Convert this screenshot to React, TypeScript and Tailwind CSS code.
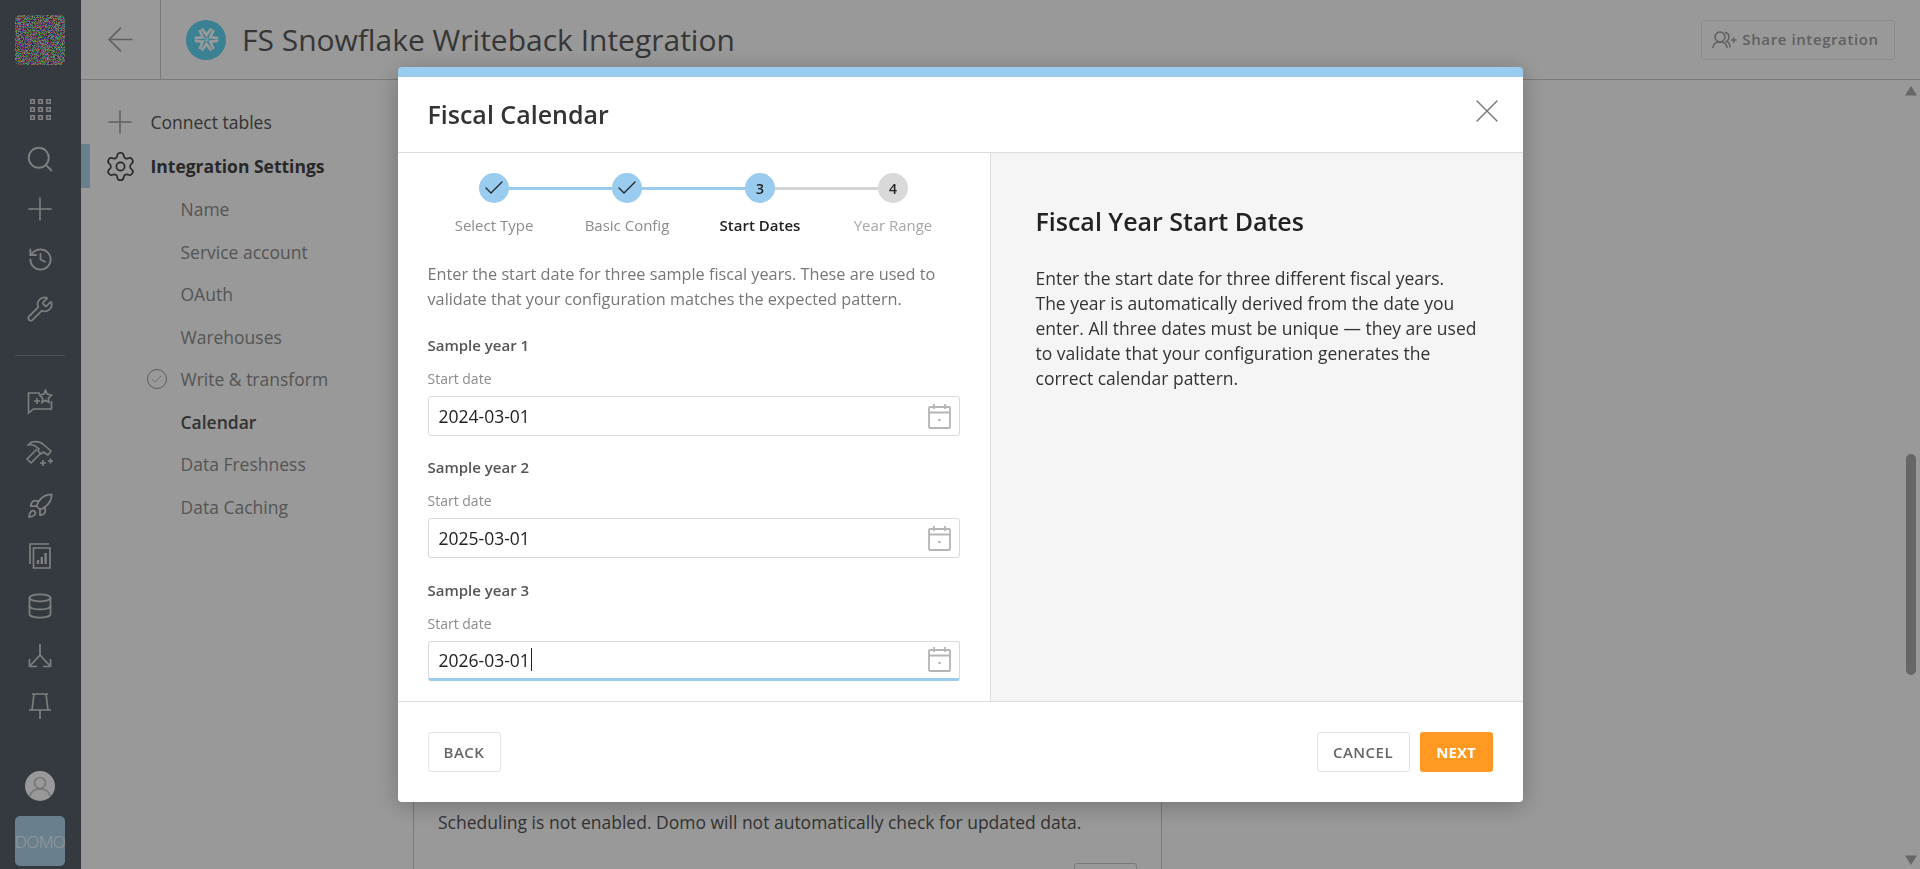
import { ArrowLeft, Check, Database, History, Plus, Rocket, Search, Settings, Wrench, X } from "lucide-react";

const FONT = "font-['Open_Sans',sans-serif]";

// deterministic noise for the generated avatar tile
function noiseCells() {
  const cells: { x: number; y: number; fill: string }[] = [];
  let seed = 7;
  const next = () => {
    seed = (seed * 16807) % 2147483647;
    return seed / 2147483647;
  };
  for (let y = 0; y < 50; y++) {
    for (let x = 0; x < 50; x++) {
      const r = Math.round(40 + next() * 215);
      const g = Math.round(40 + next() * 215);
      const b = Math.round(40 + next() * 215);
      cells.push({ x, y, fill: `rgb(${r},${g},${b})` });
    }
  }
  return cells;
}

function NoiseTile() {
  return (
    <svg viewBox="0 0 50 50" shapeRendering="crispEdges" className="h-[50px] w-[50px] rounded-[5px]">
      {noiseCells().map((cell) => (
        <rect key={`${cell.x}-${cell.y}`} x={cell.x} y={cell.y} width="1" height="1" fill={cell.fill} />
      ))}
    </svg>
  );
}

function GridIcon() {
  return (
    <svg viewBox="0 0 21 21" className="h-[21px] w-[21px]" fill="currentColor">
      {[0, 8, 16].map((y) =>
        [0, 8, 16].map((x) => (
          <path key={`${x}-${y}`} fillRule="evenodd" d={`M${x} ${y}h5v5h-5zM${x + 1.5} ${y + 1.5}v2h2v-2z`} />
        )),
      )}
    </svg>
  );
}

function AiChatIcon() {
  return (
    <svg viewBox="0 0 26 26" className="h-[26px] w-[26px]" fill="none" stroke="currentColor" strokeWidth="1.6">
      <path d="M13 4H1.500v20l5-4h18v-8" />
      <path d="M18.500 1l1.600 4 4.400 1.200-3.200 3 .6 4.300-3.400-2.200-3.600 2.200.8-4.300-3.200-3L17 5z" />
      <path d="M7 12h6M10 9v6" />
    </svg>
  );
}

function HammerPlusIcon() {
  return (
    <svg viewBox="0 0 28 28" className="h-[28px] w-[28px]" fill="none" stroke="currentColor" strokeWidth="1.6" strokeLinejoin="round">
      <path d="M2 5l4-3c5-1 9 0 12 3l7 6-3 4-5-3-2 2-3-3 1-2c-3-3-6-5-11-4z" />
      <path d="M11 9L1 19l4 4 10-10" />
      <path d="M14 23h6M17 20v6M22 21h5M24.500 18.500v5" />
    </svg>
  );
}

function PagesIcon() {
  return (
    <svg viewBox="0 0 22 26" className="h-[26px] w-[22px]" fill="none" stroke="currentColor" strokeWidth="1.7">
      <path d="M20 1H1v20" />
      <path d="M4.500 5h16.500v20H4.500z" />
      <path d="M9 21v-4M12.800 21v-7M16.600 21V10" strokeWidth="2.400" />
    </svg>
  );
}

function BranchIcon() {
  return (
    <svg viewBox="0 0 24 24" className="h-[24px] w-[24px]" fill="none" stroke="currentColor" strokeWidth="1.7">
      <path d="M12 0v11L2 22M12 11l10 11" />
      <path d="M1.500 15v7.500H9M22.500 15v7.500H15" />
    </svg>
  );
}

function PinIcon() {
  return (
    <svg viewBox="0 0 24 26" className="h-[26px] w-[24px]" fill="none" stroke="currentColor" strokeWidth="1.6">
      <path d="M4 1h16M6 1L4 17M18 1l2 16M1 17h22M12 17v9" />
    </svg>
  );
}

function SnowflakeMark() {
  return (
    <span className="flex h-10 w-10 items-center justify-center rounded-full bg-[#5fd8f5]">
      <svg viewBox="0 0 24 24" className="h-[25px] w-[25px]" fill="none" stroke="#ffffff" strokeWidth="2.600">
        {[0, 60, 120, 180, 240, 300].map((angle) => (
          <path key={angle} d="M7.500 1.500L12 7.800l4.500-6.300" transform={`rotate(${angle} 12 12)`} />
        ))}
        <circle cx="12" cy="12" r="1.400" strokeWidth="1" />
      </svg>
    </span>
  );
}

function ShareIcon() {
  return (
    <svg viewBox="0 0 25 18" className="h-[18px] w-[25px]" fill="none" stroke="currentColor" strokeWidth="1.500">
      <circle cx="8" cy="6" r="5" />
      <path d="M1 17c0-4 3-6 7-6s7 2 7 6" />
      <path d="M13 1.500c3 .5 4 2.500 4 4.500s-1 3.500-2.500 4.500c2 .5 3.500 2.500 3.500 6" />
      <path d="M19 9h5.500M21.700 6.300v5.400" />
    </svg>
  );
}

function CalendarIcon() {
  return (
    <svg viewBox="0 0 23 25" className="h-[25px] w-[23px] shrink-0" fill="none" stroke="#b5b5b5" strokeWidth="1.800">
      <rect x="1" y="3" width="21" height="21" rx="1" />
      <path d="M1 8.500h21M6 0v5M17 0v5" />
      <circle cx="11.500" cy="16" r="1.300" fill="#b5b5b5" stroke="none" />
    </svg>
  );
}

function Rail() {
  const iconSlot = "flex h-[50px] items-center justify-center";
  return (
    <aside className="flex w-[81px] shrink-0 flex-col items-center bg-[#57626a] pr-px pt-[15px] text-[#d4d4d4]">
      <NoiseTile />
      <div className="mt-[19px] flex w-full flex-col">
        <div className={iconSlot}><GridIcon /></div>
        <div className={iconSlot}><Search size={30} strokeWidth={1.500} /></div>
        <div className={iconSlot}><Plus size={38} strokeWidth={1} /></div>
        <div className={iconSlot}><History size={27} strokeWidth={1.600} /></div>
        <div className={iconSlot}><Wrench size={28} strokeWidth={1.500} /></div>
      </div>
      <div className="mt-[21px] h-px w-[50px] bg-[#7a848b]" />
      <div className="mt-[21px] flex w-full flex-col">
        <div className={iconSlot}><AiChatIcon /></div>
        <div className="flex h-[54px] items-center justify-center"><HammerPlusIcon /></div>
        <div className={iconSlot}><Rocket size={28} strokeWidth={1.500} /></div>
        <div className={iconSlot}><PagesIcon /></div>
        <div className={iconSlot}><Database size={28} strokeWidth={1.500} /></div>
        <div className={iconSlot}><BranchIcon /></div>
        <div className={iconSlot}><PinIcon /></div>
      </div>
      <div className="mt-[40px] flex h-[30px] w-[30px] items-end justify-center overflow-hidden rounded-full bg-white text-[#c6c6c6]">
        <svg viewBox="0 0 30 30" className="h-[30px] w-[30px]" fill="none" stroke="currentColor" strokeWidth="1.600">
          <circle cx="15" cy="12" r="5.500" />
          <path d="M5 25c1-5 5-7 10-7s9 2 10 7" />
        </svg>
      </div>
      <div className="mt-[15px] flex h-[50px] w-[50px] items-center justify-center overflow-hidden rounded-[5px] bg-[#b0d4ec]">
        <span className="text-[17px] font-light leading-none tracking-[-0.5px] text-white">DOMO</span>
      </div>
    </aside>
  );
}

const subItems = [
  { label: "Name" },
  { label: "Service account" },
  { label: "OAuth" },
  { label: "Warehouses" },
  { label: "Write & transform", done: true },
  { label: "Calendar", active: true },
  { label: "Data Freshness" },
  { label: "Data Caching" },
];

function SideNav() {
  return (
    <nav className="w-[332px] shrink-0 pt-[20px] text-[17.500px]">
      <div className="flex h-[44px] items-center pl-[9px]">
        <span className="flex w-[60.500px] justify-center text-[#a0a0a0]"><Plus size={38} strokeWidth={1} /></span>
        <span className="text-[#555555]">Connect tables</span>
      </div>
      <div className="flex h-[44px] items-center border-l-[9px] border-[#b0d4ec]">
        <span className="flex w-[60.500px] justify-center text-[#444444]"><Settings size={33} strokeWidth={1.200} /></span>
        <span className="font-bold text-[#444444]">Integration Settings</span>
      </div>
      <ul className="flex flex-col">
        {subItems.map((item) => (
          <li key={item.label} className="flex h-[42.500px] items-center">
            <span className="flex w-[99.500px] justify-end pr-[14px]">
              {item.done ? (
                <span className="flex h-5 w-5 items-center justify-center rounded-full border border-[#999999] text-[#999999]">
                  <Check size={13} strokeWidth={1.300} />
                </span>
              ) : null}
            </span>
            <span className={item.active ? "font-semibold text-[#555555]" : "text-[#8e8e8e]"}>{item.label}</span>
          </li>
        ))}
      </ul>
    </nav>
  );
}

function Scrollbar() {
  return (
    <div className="flex w-[17px] shrink-0 flex-col items-center pr-[2px] pt-[6px] text-[#aaaaaa]">
      <svg viewBox="0 0 12 10" className="h-[10px] w-[12px]" fill="currentColor"><path d="M6 0l6 9.500H0z" /></svg>
      <div className="mt-[358px] h-[221px] w-[10px] rounded-full bg-[#aaaaaa]" />
      <svg viewBox="0 0 12 10" className="mt-[180px] h-[10px] w-[12px]" fill="currentColor"><path d="M6 10L0 .5h12z" /></svg>
    </div>
  );
}

function Page() {
  return (
    <div className={`flex h-screen overflow-hidden bg-white ${FONT}`}>
      <Rail />
      <main className="flex min-w-0 flex-1 flex-col">
        <header className="flex h-[80px] shrink-0 items-center border-b border-[#cccccc]">
          <div className="flex h-full w-[80px] items-center justify-center border-r border-[#cccccc] pr-px text-[#a0a0a0]">
            <ArrowLeft size={39} strokeWidth={1} />
          </div>
          <div className="ml-[25px]"><SnowflakeMark /></div>
          <h1 className="ml-[16px] text-[30px] font-normal text-[#5a5a5a]">FS Snowflake Writeback Integration</h1>
          <button className="ml-auto mr-[25px] flex h-[40px] w-[194px] items-center justify-center gap-[5px] rounded-[3px] border border-[#e8e8e8] pr-[5px] text-[15px] font-semibold tracking-[0.6px] text-[#a0a0a0]">
            <ShareIcon />
            Share integration
          </button>
        </header>
        <div className="flex min-h-0 flex-1">
          <SideNav />
          <section className="h-[860px] w-[749px] shrink-0 border-x border-[#cccccc] pl-[24px] pr-[24px] pt-[730px]">
            <p className="text-[17.500px] leading-[25px] text-[#555555]">Scheduling is not enabled. Domo will not automatically check for updated data.</p>
            <div className="mt-[28px] flex justify-end">
              <button className="h-10 w-[63px] rounded-[3px] border border-[#cccccc]" />
            </div>
          </section>
          <div className="flex-1" />
          <Scrollbar />
        </div>
      </main>
    </div>
  );
}

const steps = [
  { label: "Select Type", state: "done" },
  { label: "Basic Config", state: "done" },
  { label: "Start Dates", state: "current" },
  { label: "Year Range", state: "todo" },
];

function Stepper() {
  return (
    <ol className="flex">
      {steps.map((step, index) => (
        <li key={step.label} className="relative flex flex-1 flex-col items-center">
          {index < steps.length - 1 ? (
            <span className={`absolute left-1/2 top-[13.500px] h-[3px] w-full ${step.state === "done" ? "bg-[#99ccee]" : "bg-[#d4d4d4]"}`} />
          ) : null}
          <span
            className={`relative flex h-[30px] w-[30px] items-center justify-center rounded-full text-[14px] font-semibold text-[#222222] ${
              step.state === "todo" ? "bg-[#d9d9d9]" : "bg-[#99ccee]"
            }`}
          >
            {step.state === "done" ? <Check size={24} strokeWidth={1.300} /> : index + 1}
          </span>
          <span
            className={`mt-[12px] text-[15px] leading-5 ${
              step.state === "current" ? "font-semibold text-[#222222]" : step.state === "todo" ? "text-[#a6a6a6]" : "text-[#8c8c8c]"
            }`}
          >
            {step.label}
          </span>
        </li>
      ))}
    </ol>
  );
}

function DateField({ title, value, focused }: { title: string; value: string; focused?: boolean }) {
  return (
    <div>
      <div className="text-[15px] font-semibold leading-5 text-[#555555]">{title}</div>
      <div className="mt-[15px] text-[14px] leading-[18px] text-[#8c8c8c]">Start date</div>
      <div
        className={`mt-[8px] flex h-10 items-center justify-between rounded-[3px] border border-[#d9d9d9] pl-[10px] pr-[8px] text-[17.500px] text-[#222222] ${
          focused ? "border-b-[3px] border-b-[#99ccee]" : ""
        }`}
      >
        <span className="flex items-center">
          {value}
          {focused ? <span className="ml-px h-[23px] w-px bg-[#222222]" /> : null}
        </span>
        <CalendarIcon />
      </div>
    </div>
  );
}

function FiscalCalendarDialog() {
  return (
    <div className={`flex h-[735px] w-[1125px] flex-col overflow-hidden rounded-[4px] border-t-[10px] border-[#99ccee] bg-white shadow-[0_4px_24px_rgba(0,0,0,0.25)] ${FONT}`}>
      <div className="flex h-[76px] shrink-0 items-center justify-between border-b border-[#dddddd] pl-[30px] pr-[16px]">
        <h2 className="text-[25px] font-semibold text-[#333333]">Fiscal Calendar</h2>
        <X size={40} strokeWidth={0.800} className="mt-[-8px] text-[#777777]" />
      </div>
      <div className="flex min-h-0 flex-1">
        <div className="w-[593px] shrink-0 border-r border-[#dddddd] px-[30px] pt-[20px]">
          <Stepper />
          <p className="mt-[27px] text-[16.250px] leading-[25px] text-[#777777]">
            Enter the start date for three sample fiscal years. These are used to validate that your configuration matches the expected pattern.
          </p>
          <div className="mt-[23px] flex flex-col gap-[21.400px]">
            <DateField title="Sample year 1" value="2024-03-01" />
            <DateField title="Sample year 2" value="2025-03-01" />
            <DateField title="Sample year 3" value="2026-03-01" focused />
          </div>
        </div>
        <div className="flex-1 bg-[#f5f5f5] pl-[45px] pr-[46px] pt-[52px]">
          <h3 className="text-[25px] font-semibold leading-8 text-[#222222]">Fiscal Year Start Dates</h3>
          <p className="mt-[29px] text-[17.500px] leading-[25px] text-[#333333]">
            Enter the start date for three different fiscal years. The year is automatically derived from the date you enter. All three dates must be unique — they are used to validate that your configuration generates the correct calendar pattern.
          </p>
        </div>
      </div>
      <div className="flex h-[101px] shrink-0 items-center justify-between border-t border-[#dddddd] px-[30px]">
        <button className="h-10 w-[73px] rounded-[3px] border border-[#e2e2e2] text-[15px] font-semibold tracking-[0.5px] text-[#666666]">BACK</button>
        <div className="flex gap-[10px]">
          <button className="h-10 w-[93px] rounded-[3px] border border-[#e2e2e2] text-[15px] font-semibold tracking-[0.5px] text-[#666666]">CANCEL</button>
          <button className="h-10 w-[73px] rounded-[3px] bg-[#ff9922] text-[15px] font-bold text-white">NEXT</button>
        </div>
      </div>
    </div>
  );
}

export default function App() {
  return (
    <>
      <Page />
      <div className="fixed inset-0 flex items-center justify-center bg-black/40">
        <FiscalCalendarDialog />
      </div>
    </>
  );
}
